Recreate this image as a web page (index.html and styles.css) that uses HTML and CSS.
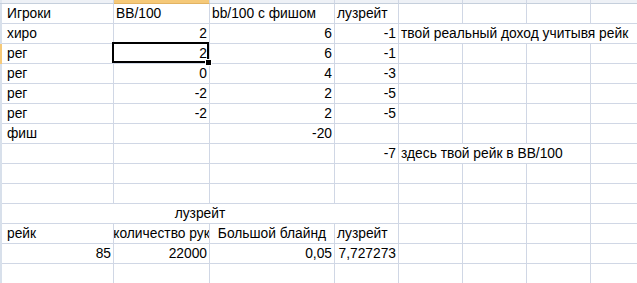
FILE: index.html
```html
<!DOCTYPE html>
<html lang="ru">
<head>
<meta charset="utf-8">
<title>Лист1</title>
<link rel="stylesheet" href="styles.css">
</head>
<body>
<div class="sheet">
  <!-- column header strip -->
  <div class="corner"></div>
  <div class="ch"></div><div class="ch ch-sel"></div><div class="ch"></div><div class="ch"></div><div class="ch"></div><div class="ch"></div><div class="ch"></div><div class="ch"></div>

  <!-- row 1 -->
  <div class="rh"></div>
  <div class="c a">Игроки</div><div class="c">BB/100</div><div class="c">bb/100 с фишом</div><div class="c">лузрейт</div><div class="c"></div><div class="c"></div><div class="c"></div><div class="c"></div>

  <!-- row 2 -->
  <div class="rh"></div>
  <div class="c a">хиро</div><div class="c n">2</div><div class="c n">6</div><div class="c n">-1</div><div class="c span4">твой реальный доход учитывя рейк</div>

  <!-- row 3 -->
  <div class="rh rh-sel"></div>
  <div class="c a">рег</div><div class="c n active">2</div><div class="c n">6</div><div class="c n">-1</div><div class="c"></div><div class="c"></div><div class="c"></div><div class="c"></div>

  <!-- row 4 -->
  <div class="rh"></div>
  <div class="c a">рег</div><div class="c n">0</div><div class="c n">4</div><div class="c n">-3</div><div class="c"></div><div class="c"></div><div class="c"></div><div class="c"></div>

  <!-- row 5 -->
  <div class="rh"></div>
  <div class="c a">рег</div><div class="c n">-2</div><div class="c n">2</div><div class="c n">-5</div><div class="c"></div><div class="c"></div><div class="c"></div><div class="c"></div>

  <!-- row 6 -->
  <div class="rh"></div>
  <div class="c a">рег</div><div class="c n">-2</div><div class="c n">2</div><div class="c n">-5</div><div class="c"></div><div class="c"></div><div class="c"></div><div class="c"></div>

  <!-- row 7 -->
  <div class="rh"></div>
  <div class="c a">фиш</div><div class="c"></div><div class="c n">-20</div><div class="c"></div><div class="c"></div><div class="c"></div><div class="c"></div><div class="c"></div>

  <!-- row 8 -->
  <div class="rh"></div>
  <div class="c a"></div><div class="c"></div><div class="c"></div><div class="c n">-7</div><div class="c span3">здесь твой рейк в BB/100</div><div class="c"></div>

  <!-- row 9 -->
  <div class="rh"></div>
  <div class="c a"></div><div class="c"></div><div class="c"></div><div class="c"></div><div class="c"></div><div class="c"></div><div class="c"></div><div class="c"></div>

  <!-- row 10 -->
  <div class="rh"></div>
  <div class="c a"></div><div class="c"></div><div class="c"></div><div class="c"></div><div class="c"></div><div class="c"></div><div class="c"></div><div class="c"></div>

  <!-- row 11 -->
  <div class="rh"></div>
  <div class="c span4 ctr">лузрейт</div><div class="c"></div><div class="c"></div><div class="c"></div><div class="c"></div>

  <!-- row 12 -->
  <div class="rh"></div>
  <div class="c a">рейк</div><div class="c ctr">количество рук</div><div class="c ctr">Большой блайнд</div><div class="c">лузрейт</div><div class="c"></div><div class="c"></div><div class="c"></div><div class="c"></div>

  <!-- row 13 -->
  <div class="rh"></div>
  <div class="c a n">85</div><div class="c n">22000</div><div class="c n">0,05</div><div class="c n">7,727273</div><div class="c"></div><div class="c"></div><div class="c"></div><div class="c"></div>

  <!-- row 14 -->
  <div class="rh"></div>
  <div class="c a"></div><div class="c"></div><div class="c"></div><div class="c"></div><div class="c"></div><div class="c"></div><div class="c"></div><div class="c"></div>
</div>
</body>
</html>
```
FILE: styles.css
```css
html, body {
  margin: 0;
  padding: 0;
  background: #fff;
  overflow: hidden;
}

.sheet {
  display: grid;
  grid-template-columns: 2px 112px 96px 125px 64px 64px 64px 64px 64px;
  grid-template-rows: 4px repeat(14, 20px);
  font-family: "Liberation Sans", Arial, sans-serif;
  font-size: 13.8px;
  color: #000;
  width: 655px;
}

.corner {
  background: #dfe6ef;
  border-bottom: 1px solid #c5cfdc;
}

.ch {
  box-sizing: border-box;
  background: #eef1f6;
  border-right: 1px solid #d0d7e5;
  border-bottom: 1px solid #c5cfdc;
}

.ch-sel {
  background: #f5c979;
  border-bottom-color: #e2b363;
}

.rh {
  background: #d8e0eb;
}

.rh-sel {
  background: #f5c979;
}

.c {
  box-sizing: border-box;
  border-right: 1px solid #d0d7e5;
  border-bottom: 1px solid #d0d7e5;
  display: flex;
  align-items: flex-end;
  padding: 0 2px 1px 2px;
  line-height: 17px;
  white-space: nowrap;
  overflow: hidden;
}

.c.a {
  padding-left: 5px;
}

.c.n {
  justify-content: flex-end;
}

.c.a.n {
  padding-left: 2px;
}

.c.ctr {
  justify-content: center;
}

.span4 {
  grid-column: span 4;
}

.span3 {
  grid-column: span 3;
}

.c.active {
  position: relative;
  overflow: visible;
}

.c.active::before {
  content: "";
  position: absolute;
  left: -2px;
  top: -2px;
  right: 0;
  bottom: 0;
  border: 2px solid #000;
}

.c.active::after {
  content: "";
  position: absolute;
  right: -3px;
  bottom: -3px;
  width: 5px;
  height: 5px;
  background: #000;
  border: 1px solid #fff;
  z-index: 2;
}
```
